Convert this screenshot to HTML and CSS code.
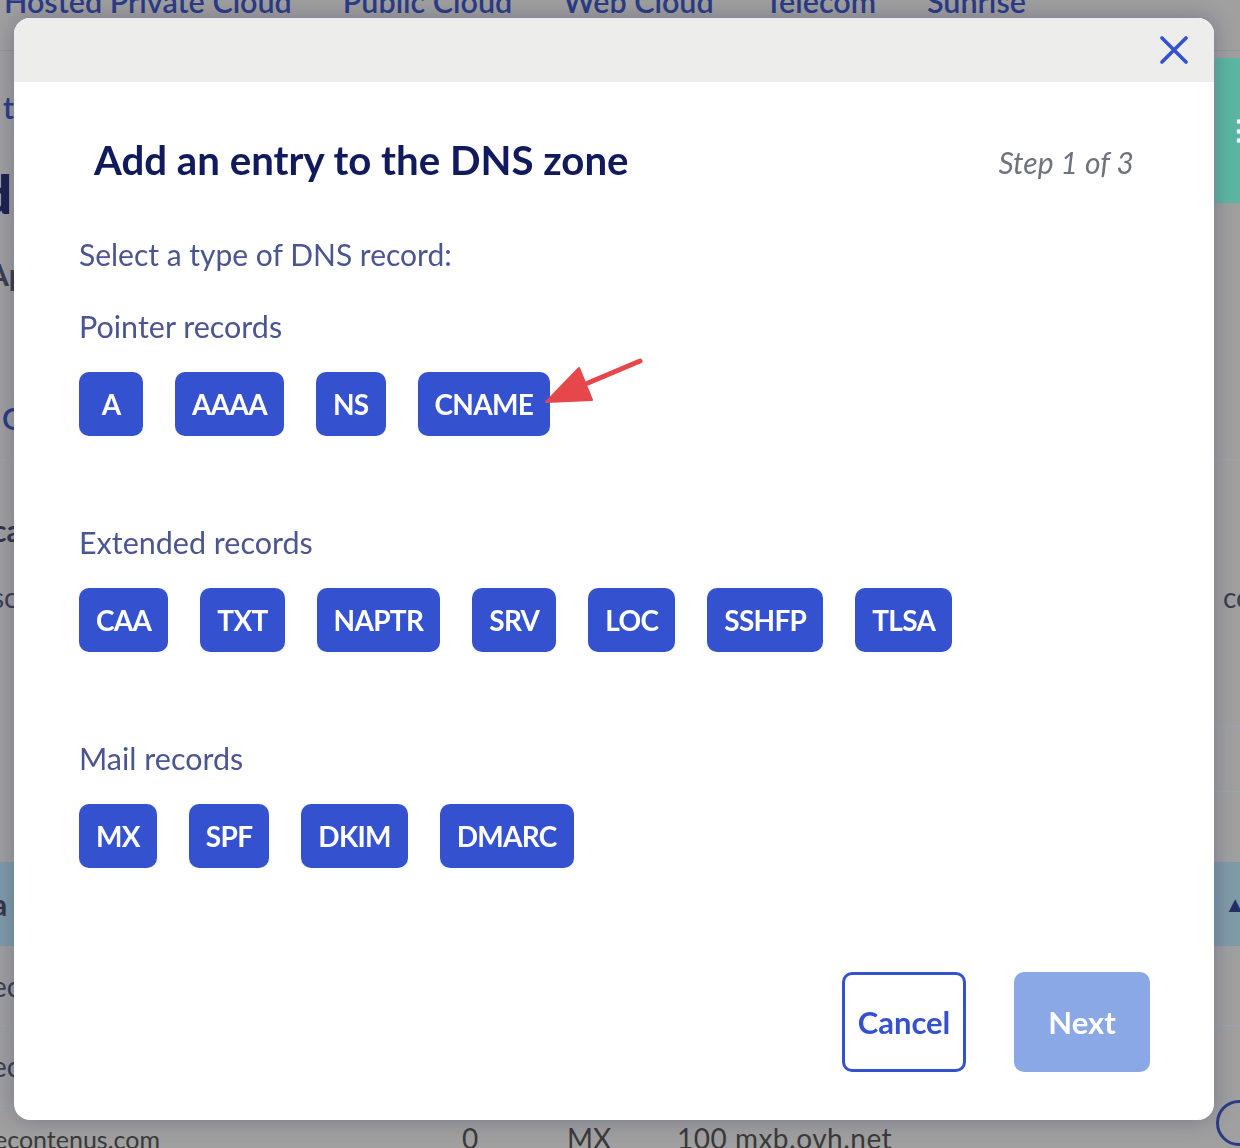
FILE: index.html
```html
<!DOCTYPE html>
<html lang="en">
<head>
<meta charset="utf-8">
<title>Add an entry to the DNS zone</title>
<link rel="stylesheet" href="styles.css">
</head>
<body>
<div class="page">
  <nav class="topnav">
    <span>Hosted Private Cloud</span>
    <span>Public Cloud</span>
    <span>Web Cloud</span>
    <span>Telecom</span>
    <span>Sunrise</span>
  </nav>
  <section class="top-area">
    <div class="top-left">
      <div class="bg-link t1">to</div>
      <div class="bg-title">d</div>
      <div class="bg-sub">Ap</div>
      <div class="bg-link t2">G</div>
    </div>
    <div class="teal-btn"><span>☰</span></div>
  </section>
  <section class="bg-row r-ca"><span class="bg-bold">ca</span></section>
  <section class="bg-row r-so"><span class="bg-text">so</span><span class="bg-text right-co">co</span></section>
  <section class="bg-row r-table"><span></span><span class="bg-cells"><i></i><i></i></span></section>
  <section class="bg-band"><span class="bg-bold">a</span><span class="band-icon">▲</span></section>
  <section class="bg-line-row"><span class="bg-text">ec</span></section>
  <section class="bg-line-row"><span class="bg-text">ec</span></section>
  <section class="bg-last">
    <span class="c1">econtenus.com</span>
    <span class="c2">0</span>
    <span class="c3">MX</span>
    <span class="c4">100 mxb.ovh.net</span>
    <span class="help-circle"></span>
  </section>
</div>

<div class="modal" role="dialog" aria-labelledby="dlg-title">
  <div class="modal-head">
    <button class="close" aria-label="Close">
      <svg width="28" height="28" viewBox="0 0 28 28"><path d="M2 2 L26 26 M26 2 L2 26" stroke="#3452cf" stroke-width="3.6" stroke-linecap="round" fill="none"/></svg>
    </button>
  </div>
  <div class="modal-body">
    <div class="title-row">
      <h1 id="dlg-title">Add an entry to the DNS zone</h1>
      <span class="step">Step 1 of 3</span>
    </div>
    <p class="lead">Select a type of DNS record:</p>

    <h2 class="group">Pointer records</h2>
    <div class="btns">
      <button class="rec">A</button>
      <button class="rec">AAAA</button>
      <button class="rec">NS</button>
      <button class="rec">CNAME</button>
    </div>

    <h2 class="group gap">Extended records</h2>
    <div class="btns">
      <button class="rec">CAA</button>
      <button class="rec">TXT</button>
      <button class="rec">NAPTR</button>
      <button class="rec">SRV</button>
      <button class="rec">LOC</button>
      <button class="rec">SSHFP</button>
      <button class="rec">TLSA</button>
    </div>

    <h2 class="group gap">Mail records</h2>
    <div class="btns">
      <button class="rec">MX</button>
      <button class="rec">SPF</button>
      <button class="rec">DKIM</button>
      <button class="rec">DMARC</button>
    </div>

    <div class="footer">
      <button class="btn-cancel">Cancel</button>
      <button class="btn-next" disabled>Next</button>
    </div>
  </div>
  <svg class="arrow" width="120" height="76" viewBox="0 0 120 76">
    <path d="M110 25 L58 47" stroke="#e5474b" stroke-width="5" stroke-linecap="round" fill="none"/>
    <path d="M16 66 L49 32 L62 64 Z" fill="#e5474b" stroke="#e5474b" stroke-width="2" stroke-linejoin="round"/>
  </svg>
</div>
</body>
</html>
```

FILE: styles.css
```css
* { box-sizing: border-box; }

body {
  margin: 0;
  width: 1240px;
  height: 1148px;
  overflow: hidden;
  background: #a0a0a0;
  font-family: "Source Sans Pro", Lato, "Liberation Sans", sans-serif;
}

/* ---------- background page (dimmed) ---------- */
.page {
  width: 1240px;
  color: #2b3b85;
}

.topnav {
  height: 51px;
  display: flex;
  gap: 51px;
  padding-left: 4px;
  border-bottom: 1px solid #959595;
  overflow: hidden;
}
.topnav span {
  margin-top: -14px;
  font-size: 30.5px;
  line-height: 30px;
  font-weight: 600;
  color: #2b3b85;
  white-space: nowrap;
}

.top-area {
  height: 409px;
  display: flex;
  justify-content: space-between;
  border-bottom: 1px solid #98a6b2;
}
.top-left {
  display: flex;
  flex-direction: column;
  padding-top: 38px;
}
.bg-link { font-size: 30px; line-height: 36px; font-weight: 600; color: #2b3b85; }
.t1 { margin-left: 3px; }
.bg-title { margin-left: -18px; margin-top: 41px; font-size: 52px; line-height: 56px; font-weight: 800; color: #1b2150; }
.bg-sub { margin-left: -12px; margin-top: 34px; font-size: 30px; line-height: 36px; font-weight: 700; color: #3a3d52; }
.t2 { margin-left: 2px; margin-top: 108px; }

.teal-btn {
  margin-top: 7px;
  width: 25px;
  height: 145px;
  background: #5db6a2;
  color: #fff;
  font-size: 30px;
  font-weight: 700;
  display: flex;
  align-items: center;
  padding-left: 20px;
  overflow: hidden;
}

.bg-row {
  display: flex;
  justify-content: space-between;
  align-items: center;
}
.r-ca { height: 100px; padding-top: 40px; }
.r-so { height: 70px; padding-top: 4px; }
.r-table { height: 232px; align-items: flex-start; padding-top: 96px; }

.bg-bold { margin-left: -8px; font-size: 30px; font-weight: 700; color: #33364a; }
.bg-text { margin-left: -8px; font-size: 28px; color: #3a3d52; }
.right-co { margin-left: 0; margin-right: -12px; }

.bg-cells {
  display: flex;
  width: 26px;
  height: 66px;
  border-top: 1px solid #98a6b2;
  border-bottom: 1px solid #98a6b2;
}
.bg-cells i { width: 19px; border-right: 1px solid #98a6b2; }
.bg-cells i + i { border: none; }

.bg-band {
  height: 84px;
  background: #7f9ba8;
  display: flex;
  justify-content: space-between;
  align-items: center;
}
.band-icon { color: #22306a; font-size: 22px; margin-right: -6px; }

.bg-line-row {
  height: 80px;
  border-bottom: 1px solid #98a6b2;
  display: flex;
  align-items: center;
}

.bg-last {
  height: 60px;
  display: flex;
  align-items: flex-start;
  padding-top: 15px;
  font-size: 28px;
  color: #3a3a3a;
  position: relative;
}
.c1 { margin-left: -6px; width: 468px; font-size: 25px; margin-top: 3px; }
.c2 { width: 105px; }
.c3 { width: 110px; }
.c4 { letter-spacing: 0.5px; }
.help-circle {
  position: absolute;
  left: 1216px;
  top: -6px;
  width: 46px;
  height: 46px;
  border: 3px solid #2b3b85;
  border-radius: 50%;
}

/* ---------- modal ---------- */
.modal {
  position: fixed;
  left: 14px;
  top: 18px;
  width: 1200px;
  height: 1102px;
  background: #fff;
  border-radius: 16px;
  box-shadow: 0 0 22px rgba(40, 40, 90, 0.35);
  overflow: hidden;
  display: flex;
  flex-direction: column;
}

.modal-head {
  height: 64px;
  flex: none;
  background: #ededeb;
  display: flex;
  justify-content: flex-end;
  align-items: center;
  padding-right: 26px;
}
.close {
  border: none;
  background: none;
  padding: 0;
  width: 28px;
  height: 28px;
  display: flex;
}

.modal-body {
  padding: 54px 64px 0 65px;
  display: flex;
  flex-direction: column;
}

.title-row {
  display: flex;
  justify-content: space-between;
  align-items: center;
  padding-right: 16px;
}
h1 {
  margin: 0 0 0 15px;
  font-size: 40.2px;
  line-height: 48px;
  font-weight: 700;
  color: #101a5c;
}
.step {
  margin-top: 4px;
  font-size: 30px;
  font-style: italic;
  color: #6e737d;
}

.lead {
  margin: 52px 0 0;
  font-size: 30px;
  line-height: 36px;
  color: #4a5592;
}

.group {
  margin: 36px 0 0;
  font-size: 30.5px;
  line-height: 36px;
  font-weight: 400;
  color: #4a5592;
}
.group.gap { margin-top: 88px; }

.btns {
  margin-top: 28px;
  display: flex;
  gap: 32px;
}
.rec {
  min-width: 64px;
  height: 64px;
  padding: 0 17px;
  border: none;
  border-radius: 10px;
  background: #3452cf;
  color: #fff;
  font-family: inherit;
  font-size: 28px;
  font-weight: 700;
  letter-spacing: -0.7px;
}

.footer {
  margin-top: 104px;
  display: flex;
  justify-content: flex-end;
  gap: 48px;
}
.btn-cancel,
.btn-next {
  height: 100px;
  border-radius: 10px;
  font-family: inherit;
  font-size: 31px;
  font-weight: 700;
}
.btn-cancel {
  width: 124px;
  border: 3px solid #3452cf;
  background: #fff;
  color: #3452cf;
}
.btn-next {
  width: 136px;
  border: none;
  background: #8aa8e6;
  color: #fff;
}

/* annotation arrow; coordinates relative to the modal */
.arrow {
  position: absolute;
  left: 516px;
  top: 318px;
}
```
